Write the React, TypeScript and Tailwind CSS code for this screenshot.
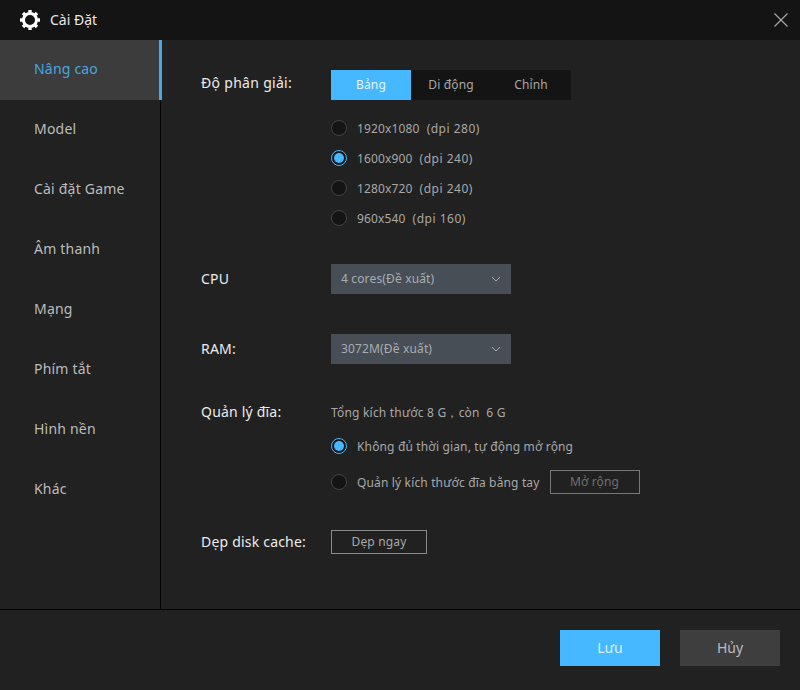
import React from 'react';

const menu = ['Nâng cao', 'Model', 'Cài đặt Game', 'Âm thanh', 'Mạng', 'Phím tắt', 'Hình nền', 'Khác'];

const resolutions = [
  {label: '1920x1080', dpi: '(dpi 280)', on: false},
  {label: '1600x900', dpi: '(dpi 240)', on: true},
  {label: '1280x720', dpi: '(dpi 240)', on: false},
  {label: '960x540', dpi: '(dpi 160)', on: false},
];

function Radio({on}: {on: boolean}) {
  if (on) {
    return (
      <span className="flex h-4 w-4 shrink-0 items-center justify-center rounded-full border border-[#45b8ff] bg-[#141414]">
        <span className="h-[10px] w-[10px] rounded-full bg-[#45b8ff]" />
      </span>
    );
  }
  return <span className="h-4 w-4 shrink-0 rounded-full border border-[#444444] bg-[#141414]" />;
}

function Select({text}: {text: string}) {
  return (
    <div className="flex h-[30px] w-[180px] items-center justify-between bg-[#474e55] pl-[10px] pr-[9px] text-xs tracking-[0.15px] text-[#a8adb2]">
      <span>{text}</span>
      <svg className="h-3 w-3" viewBox="0 0 12 12" fill="none" stroke="#a8adb2" strokeWidth="1">
        <path d="M2 4l4 4 4-4" />
      </svg>
    </div>
  );
}

function Gear() {
  return (
    <svg className="h-5 w-5" viewBox="0 0 20 20" fill="none" stroke="#ffffff">
      <circle cx="10" cy="10" r="6.5" strokeWidth="3" />
      <path strokeWidth="3.4" d="M10 0v3M10 17v3M0 10h3M17 10h3M3 3l2.1 2.1M14.9 14.9L17 17M17 3l-2.1 2.1M5.1 14.9L3 17" />
    </svg>
  );
}

export default function App() {
  return (
    <div className="flex h-[690px] w-[800px] flex-col bg-[#212121] font-['Noto_Sans','Open_Sans',sans-serif] text-[#ececec]">
      {/* title bar */}
      <div className="flex h-10 shrink-0 items-center justify-between bg-[#141414] pl-5 pr-[11px]">
        <div className="flex items-center gap-[10px]">
          <Gear />
          <span className="text-sm text-[#e8e8e8]">Cài Đặt</span>
        </div>
        <svg className="h-4 w-4" viewBox="0 0 16 16" stroke="#a6a6a6" strokeWidth="1.2">
          <path d="M1.5 1.5l13 13M14.5 1.5l-13 13" />
        </svg>
      </div>

      <div className="flex min-h-0 flex-1">
        {/* sidebar */}
        <div className="w-[161px] shrink-0 border-r border-black">
          {menu.map((m, i) => (
            <div
              key={m}
              className={
                i === 0
                  ? 'relative flex h-[60px] items-center bg-[#3c3c3c] pb-[2px] pl-[34px] text-sm tracking-[0.2px] text-[#4ba6e0]'
                  : 'flex h-[60px] items-center pb-[2px] pl-[34px] text-sm tracking-[0.2px] text-[#bcbcbc]'
              }
            >
              {m}
              {i === 0 && <span className="absolute -right-[2px] top-0 h-[60px] w-[3px] bg-[#45abe8]" />}
            </div>
          ))}
        </div>

        {/* settings */}
        <div className="flex-1 pl-10 pt-[30px]">
          <div className="flex">
            <div className="w-[130px] pt-[3px] text-sm leading-5 tracking-[0.3px]">Độ phân giải:</div>
            <div>
              <div className="flex h-[30px] w-[240px] bg-[#141414] text-xs tracking-[0.15px]">
                <div className="flex w-20 items-center justify-center bg-[#45b8ff] text-[#e6f5ff]">Bảng</div>
                <div className="flex w-20 items-center justify-center text-[#a8a8a8]">Di động</div>
                <div className="flex w-20 items-center justify-center text-[#a8a8a8]">Chỉnh</div>
              </div>
              <div className="mt-[13px]">
                {resolutions.map((r) => (
                  <div key={r.label} className="flex h-[30px] items-center gap-[10px] text-xs tracking-[0.15px] text-[#a8a8a8]">
                    <Radio on={r.on} />
                    <span className="flex gap-[7px] pt-[2px]">
                      <span>{r.label}</span>
                      <span className="tracking-[0.5px]">{r.dpi}</span>
                    </span>
                  </div>
                ))}
              </div>
            </div>
          </div>

          <div className="mt-[31px] flex items-center">
            <div className="w-[130px] text-sm tracking-[0.2px]">CPU</div>
            <Select text="4 cores(Đề xuất)" />
          </div>

          <div className="mt-10 flex items-center">
            <div className="w-[130px] text-sm tracking-[0.2px]">RAM:</div>
            <Select text="3072M(Đề xuất)" />
          </div>

          <div className="mt-[38px] flex">
            <div className="w-[130px] text-sm leading-5 tracking-[0.2px]">Quản lý đĩa:</div>
            <div>
              <div className="h-5 pt-[1px] text-xs leading-5 tracking-[0.2px] text-[#a8a8a8]">
                <span className="whitespace-pre">Tổng kích thước 8 G，còn  6 G</span>
              </div>
              <div className="mt-[9px] flex h-[30px] items-center gap-[10px] text-xs tracking-[0.15px] text-[#a8a8a8]">
                <Radio on={true} />
                <span className="pt-[2px]">Không đủ thời gian, tự động mở rộng</span>
              </div>
              <div className="mt-[6px] flex h-[30px] items-center gap-[10px] text-xs tracking-[0.15px] text-[#a8a8a8]">
                <Radio on={false} />
                <span className="pt-[2px]">Quản lý kích thước đĩa bằng tay</span>
                <button className="flex h-6 w-[90px] items-center justify-center border border-[#777777] text-[#707070]">Mở rộng</button>
              </div>
            </div>
          </div>

          <div className="mt-[33px] flex items-center">
            <div className="w-[130px] text-sm tracking-[0.2px]">Dẹp disk cache:</div>
            <button className="flex h-6 w-24 items-center justify-center border border-[#8a8a8a] text-xs tracking-[0.15px] text-[#a8a8a8]">Dẹp ngay</button>
          </div>
        </div>
      </div>

      {/* footer */}
      <div className="flex h-[81px] shrink-0 justify-end gap-5 border-t border-black pr-5 pt-5">
        <button className="h-9 w-[100px] bg-[#45b8ff] text-sm text-[#d8f1ff]">Lưu</button>
        <button className="h-9 w-[100px] bg-[#3e3e3e] text-sm text-[#bcbcbc]">Hủy</button>
      </div>
    </div>
  );
}
